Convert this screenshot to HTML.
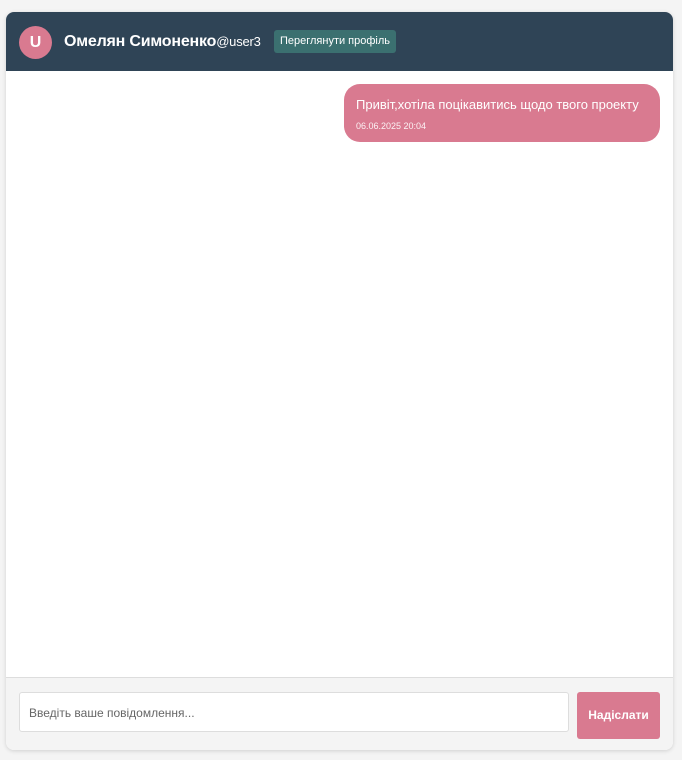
<!DOCTYPE html>
<html><head><meta charset="utf-8"><style>
*{box-sizing:border-box;margin:0;padding:0}
body{width:682px;height:760px;background:#f4f4f4;font-family:"Liberation Sans","DejaVu Sans",sans-serif;position:relative;overflow:hidden}
.card{position:absolute;left:6px;top:12px;width:667px;height:738px;background:#fff;border-radius:8px;box-shadow:0 1px 4px rgba(0,0,0,.15);overflow:hidden}
.hdr{position:absolute;left:0;top:0;width:100%;height:59px;background:#2f4456}
.av{position:absolute;left:13px;top:14px;width:33px;height:33px;border-radius:50%;background:#d97a90;color:#fff;font-weight:bold;font-size:16px;text-align:center;line-height:33px}
.name{position:absolute;left:58px;top:21px;color:#fff;font-size:16px;font-weight:bold;letter-spacing:-.2px}
.name span{font-weight:normal;font-size:13px}
.pb{position:absolute;left:268px;top:18px;width:122px;height:23px;background:#3b7070;color:#fff;font-size:11px;border-radius:3px;text-align:center;line-height:23px}
.bub{position:absolute;left:338px;top:72px;width:316px;height:58px;background:#d97a90;border-radius:16px;color:#fff}
.bub .t{position:absolute;left:12px;top:13px;font-size:13px}
.bub .d{position:absolute;left:12px;top:37px;font-size:9px;opacity:.9}
.ft{position:absolute;left:0;top:665px;width:100%;height:73px;background:#f4f4f4;border-top:1px solid #ddd}
.in{position:absolute;left:13px;top:14px;width:550px;height:40px;background:#fff;border:1px solid #ddd;border-radius:3px;font-size:12px;color:#666;padding:13px 0 0 9px}
.sb{position:absolute;left:571px;top:14px;width:83px;height:47px;background:#d97a90;border-radius:3px;color:#fff;font-weight:bold;font-size:12px;text-align:center;line-height:47px}
</style></head><body>
<div class="card">
<div class="hdr"><div class="av">U</div><div class="name">Омелян Симоненко<span>@user3</span></div><div class="pb">Переглянути профіль</div></div>
<div class="bub"><div class="t">Привіт,хотіла поцікавитись щодо твого проекту</div><div class="d">06.06.2025 20:04</div></div>
<div class="ft"><div class="in">Введіть ваше повідомлення...</div><div class="sb">Надіслати</div></div>
</div>
</body></html>
